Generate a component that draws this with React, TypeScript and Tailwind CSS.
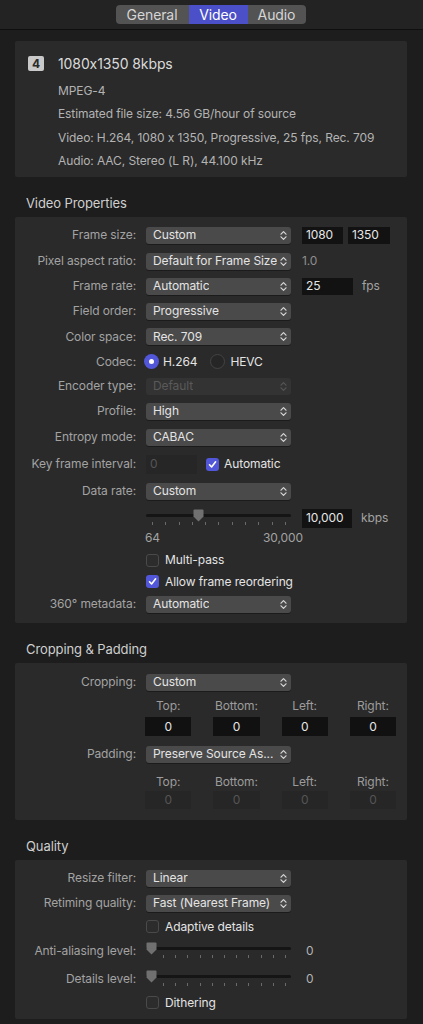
import React from 'react';

function Chevrons({ color = '#d8d8d8' }: { color?: string }) {
  return (
    <svg width="7" height="11" viewBox="0 0 7 11" className="shrink-0">
      <path d="M1 4.2 L3.5 1.6 L6 4.2 M1 6.8 L3.5 9.4 L6 6.8" stroke={color} strokeWidth="1.2" fill="none" strokeLinecap="round" strokeLinejoin="round" />
    </svg>
  );
}

function Label({ children }: { children: React.ReactNode }) {
  return <div className="w-[121px] shrink-0 text-right text-[12px] text-[#a3a3a3] pr-0">{children}</div>;
}

function Popup({ value, disabled }: { value: string; disabled?: boolean }) {
  return (
    <div
      className={`ml-[10px] w-[145px] h-[17px] shrink-0 rounded-[3px] flex items-center justify-between pl-[7px] pr-[4px] text-[12px] ${
        disabled ? 'bg-[#333333] text-[#5a5a5a]' : 'bg-[#4a4a4a] text-[#e4e4e4] shadow-[0_1px_0_rgba(0,0,0,0.35)]'
      }`}
    >
      <span className="truncate">{value}</span>
      <Chevrons color={disabled ? '#555' : '#d8d8d8'} />
    </div>
  );
}

function Field({ value, w, dim }: { value: string; w: string; dim?: boolean }) {
  return (
    <div className={`${w} h-[17px] flex items-center px-[4px] text-[12px] ${dim ? 'bg-[#262626] text-[#555]' : 'bg-[#121212] text-[#e6e6e6]'}`}>
      {value}
    </div>
  );
}

function Check({ on }: { on?: boolean }) {
  return on ? (
    <div className="w-[13px] h-[13px] rounded-[3px] bg-[#5157d8] flex items-center justify-center shrink-0">
      <svg width="9" height="9" viewBox="0 0 9 9">
        <path d="M1.5 4.8 L3.6 7 L7.6 1.8" stroke="#fff" strokeWidth="1.6" fill="none" strokeLinecap="round" strokeLinejoin="round" />
      </svg>
    </div>
  ) : (
    <div className="w-[13px] h-[13px] rounded-[3px] bg-[#2c2c2c] border border-[#4a4a4a] shrink-0" />
  );
}

function Radio({ on }: { on?: boolean }) {
  return on ? (
    <div className="w-[15px] h-[15px] rounded-full bg-[#5157d8] flex items-center justify-center shrink-0">
      <div className="w-[5px] h-[5px] rounded-full bg-white" />
    </div>
  ) : (
    <div className="w-[15px] h-[15px] rounded-full bg-[#262626] border border-[#444] shrink-0" />
  );
}

function Ticks({ count }: { count: number }) {
  return (
    <div className="flex justify-between">
      {Array.from({ length: count }).map((_, i) => (
        <div key={i} className="w-px h-[3px] bg-[#6a6a6a]" />
      ))}
    </div>
  );
}

function Thumb() {
  return (
    <svg width="11" height="13" viewBox="0 0 11 13">
      <path d="M1.5 0.5 H9.5 Q10.5 0.5 10.5 1.5 V7.5 L5.5 12.5 L0.5 7.5 V1.5 Q0.5 0.5 1.5 0.5 Z" fill="#707070" />
    </svg>
  );
}

function Slider({ pos, tickLeft }: { pos: string; tickLeft: string }) {
  return (
    <div className="ml-[10px] relative w-[145px] h-full shrink-0">
      <div className="absolute left-0 right-0 top-[10px] h-[3px] rounded-full bg-[#151515]" />
      <div className={`absolute top-[5px] ${pos}`}>
        <Thumb />
      </div>
      <div className={`absolute top-[18px] right-[5px] ${tickLeft}`}>
        <Ticks count={11} />
      </div>
    </div>
  );
}

function SectionTitle({ children }: { children: React.ReactNode }) {
  return (
    <div className="h-[40px] flex items-end pb-[6px] pl-[11px] text-[13px] leading-[16px] text-[#cfcfcf]">{children}</div>
  );
}

function Row({ h, label, children }: { h: string; label?: string; children?: React.ReactNode }) {
  return (
    <div className={`${h} flex items-center`}>
      <Label>{label}</Label>
      {children}
    </div>
  );
}

function Inset({ children }: { children: React.ReactNode }) {
  return <div className="ml-[131px] flex items-center">{children}</div>;
}

export default function App() {
  return (
    <div className="w-[423px] h-[1024px] overflow-hidden bg-[#1d1d1d] font-['Inter',sans-serif] tracking-[-0.1px]">
      {/* toolbar tabs */}
      <div className="h-[30px] bg-[#232323] border-b border-[#0f0f0f] flex justify-center pt-[5px]">
        <div className="flex h-[19px] rounded-[4px] overflow-hidden bg-[#535353] text-[14px] leading-[19px] text-[#d6d6d6] ml-[-2px]">
          <div className="w-[73px] text-center">General</div>
          <div className="w-[59px] text-center bg-[#4b50c9] text-white">Video</div>
          <div className="w-[58px] text-center">Audio</div>
        </div>
      </div>

      <div className="pl-[15px] pr-[16px] pt-[11px]">
        {/* summary */}
        <div className="h-[136px] bg-[#2a2a2a] rounded-[2px] pl-[13px] pt-[15px]">
          <div className="flex items-center h-[15px]">
            <div className="w-[16px] h-[15px] rounded-[2px] bg-[#c9c9c9] text-[#2a2a2a] text-[12px] font-bold flex items-center justify-center">4</div>
            <div className="ml-[14px] text-[14px] text-[#dadada]">1080x1350 8kbps</div>
          </div>
          <div className="ml-[30px] mt-[8px] flex flex-col text-[12px] text-[#b3b3b3] leading-[23.4px]">
            <div>MPEG-4</div>
            <div>Estimated file size: 4.56 GB/hour of source</div>
            <div>Video: H.264, 1080 x 1350, Progressive, 25 fps, Rec. 709</div>
            <div>Audio: AAC, Stereo (L R), 44.100 kHz</div>
          </div>
        </div>

        <SectionTitle>Video Properties</SectionTitle>
        <div className="bg-[#2a2a2a] rounded-[2px] pt-[5px] pb-[7px]">
          <Row h="h-[26px]" label="Frame size:">
            <Popup value="Custom" />
            <div className="ml-[11px] flex gap-[5px]">
              <Field value="1080" w="w-[41px]" />
              <Field value="1350" w="w-[42px]" />
            </div>
          </Row>
          <Row h="h-[26px]" label="Pixel aspect ratio:">
            <Popup value="Default for Frame Size" />
            <span className="ml-[11px] text-[12px] text-[#8e8e8e]">1.0</span>
          </Row>
          <Row h="h-[24px]" label="Frame rate:">
            <Popup value="Automatic" />
            <div className="ml-[11px]">
              <Field value="25" w="w-[51px]" />
            </div>
            <span className="ml-[9px] text-[12px] text-[#a3a3a3]">fps</span>
          </Row>
          <Row h="h-[26px]" label="Field order:">
            <Popup value="Progressive" />
          </Row>
          <Row h="h-[25px]" label="Color space:">
            <Popup value="Rec. 709" />
          </Row>
          <Row h="h-[25px]" label="Codec:">
            <div className="ml-[8px] flex items-center">
              <Radio on />
              <span className="ml-[4px] text-[12px] text-[#e4e4e4]">H.264</span>
              <div className="ml-[13px]">
                <Radio />
              </div>
              <span className="ml-[5px] text-[12px] text-[#e4e4e4]">HEVC</span>
            </div>
          </Row>
          <Row h="h-[24px]" label="Encoder type:">
            <Popup value="Default" disabled />
          </Row>
          <Row h="h-[26px]" label="Profile:">
            <Popup value="High" />
          </Row>
          <Row h="h-[26px]" label="Entropy mode:">
            <Popup value="CABAC" />
          </Row>
          <Row h="h-[28px]" label="Key frame interval:">
            <div className="ml-[10px] w-[51px] h-[19px] bg-[#262626] text-[12px] text-[#555] flex items-center px-[4px]">0</div>
            <div className="ml-[9px] flex items-center">
              <Check on />
              <span className="ml-[5px] text-[12px] text-[#e4e4e4]">Automatic</span>
            </div>
          </Row>
          <Row h="h-[26px]" label="Data rate:">
            <Popup value="Custom" />
          </Row>
          <Row h="h-[23px]">
            <Slider pos="left-[47px]" tickLeft="left-[6px]" />
            <div className="ml-[11px] mt-[5px] w-[50px] h-[19px] bg-[#121212] text-[12px] text-[#e6e6e6] flex items-center px-[4px]">10,000</div>
            <span className="ml-[9px] mt-[4px] text-[12px] text-[#a3a3a3]">kbps</span>
          </Row>
          <div className="h-[22px] flex items-center">
            <div className="ml-[130px] w-[158px] flex justify-between text-[12px] text-[#a3a3a3]">
              <span>64</span>
              <span>30,000</span>
            </div>
          </div>
          <div className="h-[22px] flex items-center">
            <Inset>
              <Check />
              <span className="ml-[6px] text-[12px] text-[#e4e4e4]">Multi-pass</span>
            </Inset>
          </div>
          <div className="h-[21px] flex items-center">
            <Inset>
              <Check on />
              <span className="ml-[6px] text-[12px] text-[#e4e4e4]">Allow frame reordering</span>
            </Inset>
          </div>
          <Row h="h-[24px]" label="360° metadata:">
            <Popup value="Automatic" />
          </Row>
        </div>

        <SectionTitle>Cropping &amp; Padding</SectionTitle>
        <div className="bg-[#2a2a2a] rounded-[2px] pt-[6px] pb-[11px]">
          <Row h="h-[26px]" label="Cropping:">
            <Popup value="Custom" />
          </Row>
          <div className="ml-[130px] w-[251px] grid grid-cols-4 gap-x-[22px] text-[12px]">
            {['Top:', 'Bottom:', 'Left:', 'Right:'].map(t => (
              <div key={t} className="h-[22px] flex items-center justify-center text-[#9c9c9c]">{t}</div>
            ))}
            {[0, 1, 2, 3].map(i => (
              <div key={i} className="h-[19px] bg-[#111111] text-[#e6e6e6] flex items-center justify-center">0</div>
            ))}
          </div>
          <Row h="h-[36px]" label="Padding:">
            <Popup value="Preserve Source As..." />
          </Row>
          <div className="ml-[130px] w-[251px] grid grid-cols-4 gap-x-[22px] text-[12px]">
            {['Top:', 'Bottom:', 'Left:', 'Right:'].map(t => (
              <div key={t} className="h-[19px] flex items-center justify-center text-[#9c9c9c]">{t}</div>
            ))}
            {[0, 1, 2, 3].map(i => (
              <div key={i} className="h-[18px] bg-[#262626] text-[#555] flex items-center justify-center">0</div>
            ))}
          </div>
        </div>

        <SectionTitle>Quality</SectionTitle>
        <div className="bg-[#2a2a2a] rounded-[2px] pt-[6px] pb-[6px]">
          <Row h="h-[24px]" label="Resize filter:">
            <Popup value="Linear" />
          </Row>
          <Row h="h-[26px]" label="Retiming quality:">
            <Popup value="Fast (Nearest Frame)" />
          </Row>
          <div className="h-[21px] flex items-center">
            <Inset>
              <Check />
              <span className="ml-[6px] text-[12px] text-[#e4e4e4]">Adaptive details</span>
            </Inset>
          </div>
          <Row h="h-[28px]" label="Anti-aliasing level:">
            <Slider pos="left-0" tickLeft="left-[17px]" />
            <span className="ml-[15px] text-[12px] text-[#b3b3b3]">0</span>
          </Row>
          <Row h="h-[27px]" label="Details level:">
            <Slider pos="left-0" tickLeft="left-[17px]" />
            <span className="ml-[15px] text-[12px] text-[#b3b3b3]">0</span>
          </Row>
          <div className="h-[21px] flex items-center">
            <Inset>
              <Check />
              <span className="ml-[6px] text-[12px] text-[#e4e4e4]">Dithering</span>
            </Inset>
          </div>
        </div>
      </div>
    </div>
  );
}
